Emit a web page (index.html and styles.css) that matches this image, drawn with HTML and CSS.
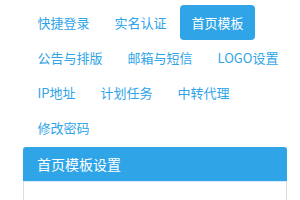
FILE: index.html
```html
<!DOCTYPE html>
<html lang="zh">
<head>
<meta charset="utf-8">
<link rel="stylesheet" href="styles.css">
</head>
<body>
<div class="page">
  <ul class="pills">
    <li><a href="#">快捷登录</a></li>
    <li><a href="#">实名认证</a></li>
    <li class="active"><a href="#">首页模板</a></li>
    <li><a href="#">公告与排版</a></li>
    <li><a href="#">邮箱与短信</a></li>
    <li><a href="#">LOGO设置</a></li>
    <li><a href="#">IP地址</a></li>
    <li><a href="#">计划任务</a></li>
    <li><a href="#">中转代理</a></li>
    <li><a href="#">修改密码</a></li>
  </ul>
  <div class="panel">
    <div class="panel-heading">首页模板设置</div>
    <div class="panel-body"></div>
  </div>
</div>
</body>
</html>
```

FILE: styles.css
```css
html, body {
  margin: 0;
  padding: 0;
  background: #fff;
  overflow: hidden;
}
body {
  font-family: "Noto Sans CJK SC", "Noto Sans", sans-serif;
  font-size: 13px;
}
.page {
  padding: 5px 13px 0 23px;
}
.pills {
  list-style: none;
  margin: 0 -8px 2px 3px;
  padding: 0;
  display: flex;
  flex-wrap: wrap;
  column-gap: 2px;
}
.pills li a {
  display: block;
  height: 35px;
  line-height: 35px;
  padding: 0 11.5px;
  color: #2fa4e7;
  text-decoration: none;
  border-radius: 4px;
}
.pills li.active a {
  background: #2fa4e7;
  color: #fff;
}
.panel {
  border: 1px solid #dddddd;
  border-radius: 4px 4px 0 0;
  border-bottom: none;
}
.panel-heading {
  background: #2fa4e7;
  color: #fff;
  font-size: 14px;
  line-height: 20px;
  padding: 7px 14px;
  border-bottom: 1px solid #d6ebf8;
  margin: -1px -1px 0 -1px;
  border-radius: 3px 3px 0 0;
}
.panel-body {
  height: 40px;
}
```
